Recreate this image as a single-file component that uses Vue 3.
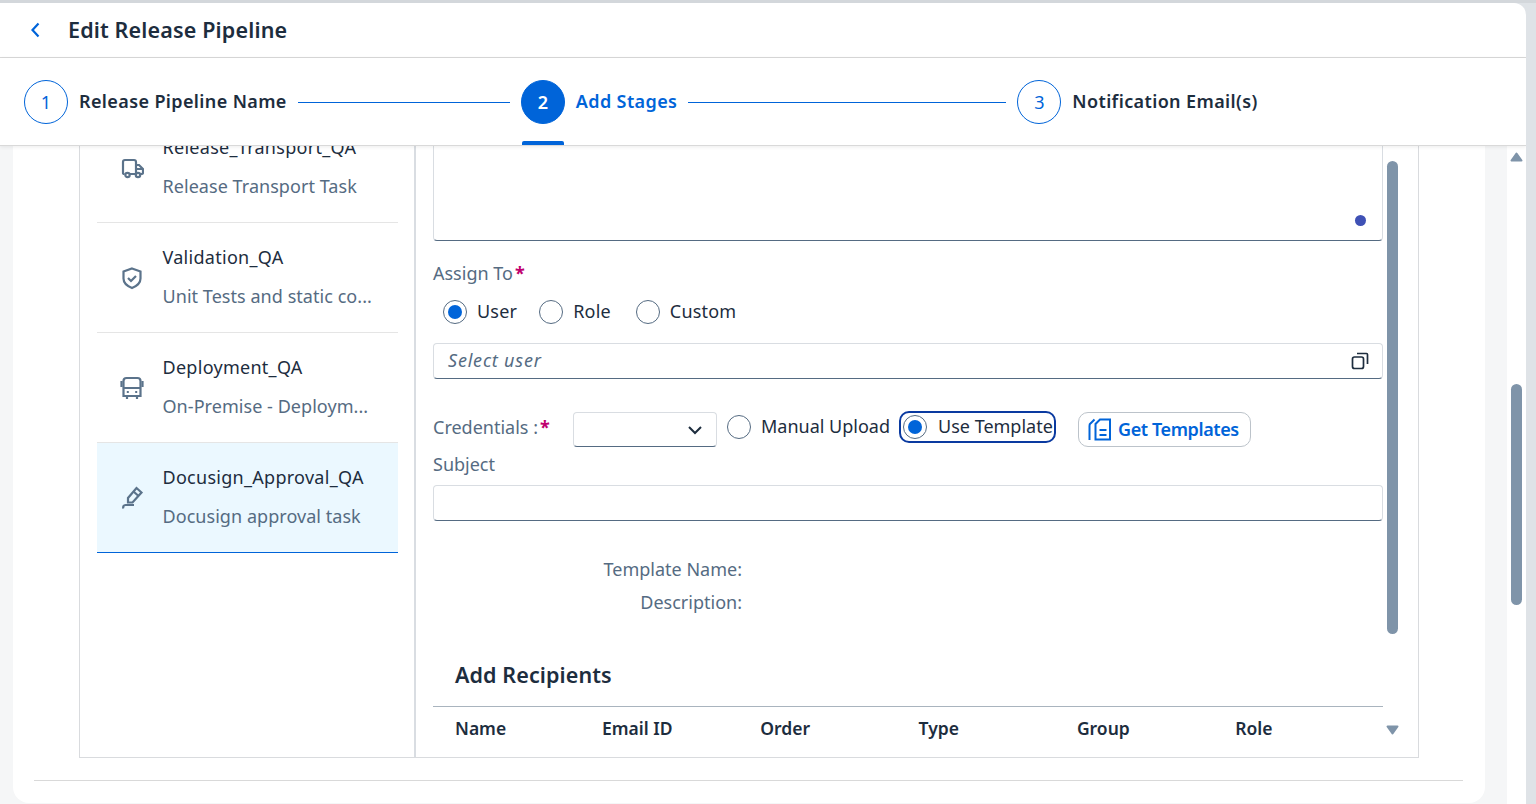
<script setup>
const steps = [
  { n: 1, label: 'Release Pipeline Name', line: 212 },
  { n: 2, label: 'Add Stages', line: 318, active: true },
  { n: 3, label: 'Notification Email(s)' }
]
const tasks = [
  { title: 'Release_Transport_QA', sub: 'Release Transport Task', icon: 'truck' },
  { title: 'Validation_QA', sub: 'Unit Tests and static co...', icon: 'shield' },
  { title: 'Deployment_QA', sub: 'On-Premise - Deploym...', icon: 'bus' },
  { title: 'Docusign_Approval_QA', sub: 'Docusign approval task', icon: 'pen', selected: true }
]
const cols = ['Name', 'Email ID', 'Order', 'Type', 'Group', 'Role']
</script>

<template>
  <div class="page">
    <div class="dialog">
      <header class="head">
        <svg class="back" width="12" height="16" viewBox="0 0 12 16"><path d="M9.500 1.500 3.500 8l6 6.500" fill="none" stroke="#0064d9" stroke-width="2.200"/></svg>
        <h1>Edit Release Pipeline</h1>
      </header>
      <nav class="steps">
        <template v-for="s in steps" :key="s.n">
          <div class="step" :class="{ active: s.active }">
            <span class="num">{{ s.n }}</span>
            <span class="step-label">{{ s.label }}</span>
          </div>
          <span v-if="s.line" class="connector" :style="{ width: s.line + 'px' }"></span>
        </template>
      </nav>
      <div class="body">
        <main class="card">
          <section class="panel">
            <aside class="list">
              <div class="items">
                <div v-for="t in tasks" :key="t.title" class="item" :class="{ selected: t.selected }">
                  <svg class="ticon" width="24" height="24" viewBox="0 0 24 24" fill="none" stroke="#5b738b" stroke-width="2.200">
                    <template v-if="t.icon === 'truck'">
                      <path d="M4.500 18H3.500A1.500 1.500 0 0 1 3 16.500V6a2 2 0 0 1 2-2h9a2 2 0 0 1 2 2v12H10"/>
                      <path d="M16 9h3L23 13v3.500A1.500 1.500 0 0 1 21.500 18h-.8M16 13h7"/>
                      <circle cx="7.500" cy="19" r="2.200"/><circle cx="18" cy="19" r="2.200"/>
                    </template>
                    <template v-else-if="t.icon === 'shield'">
                      <path d="M12 2.500 20.500 5.500v7c0 4.500-3.500 7.500-8.500 9.500-5-2-8.500-5-8.500-9.500v-7z"/>
                      <path d="m8 12 3 3 5-5"/>
                    </template>
                    <template v-else-if="t.icon === 'bus'">
                      <path d="M6.500 2h11A3 3 0 0 1 20.500 5v15h-17V5a3 3 0 0 1 3-3z"/>
                      <path d="M3.500 12h17M1.500 5v6M22.500 5v6M7 20v3M17 20v3"/>
                      <path d="M6.800 16h2M15.200 16h2"/>
                    </template>
                    <template v-else>
                      <path d="M16.500 2 21.500 6.500 12.500 16.500H8v-4.500z"/>
                      <path d="M13.500 5.500 18.500 10"/>
                      <path d="M3.500 22.500c-1-1.800.2-3.500 2-3.500h8.500"/>
                    </template>
                  </svg>
                  <div class="ttext">
                    <div class="ttitle">{{ t.title }}</div>
                    <div class="tsub">{{ t.sub }}</div>
                  </div>
                </div>
              </div>
            </aside>
            <div class="form">
              <div class="textarea"><span class="dot"></span></div>
              <div class="label assign">Assign To<span class="req">*</span></div>
              <div class="radios">
                <label class="radio on"><i></i><span>User</span></label>
                <label class="radio"><i></i><span>Role</span></label>
                <label class="radio"><i></i><span>Custom</span></label>
              </div>
              <div class="input user">
                <span class="ph">Select user</span>
                <svg width="18" height="18" viewBox="0 0 18 18" fill="none" stroke="#1d2d3e" stroke-width="1.700"><rect x="1.500" y="5" width="11" height="11.500" rx="2"/><path d="M6 1.500h9.500a1 1 0 0 1 1 1V12"/></svg>
              </div>
              <div class="cred">
                <span class="label cred-label">Credentials :<span class="req">*</span></span>
                <div class="select"><svg width="16" height="10" viewBox="0 0 16 10"><path d="m2 2 6 6 6-6" fill="none" stroke="#1d2d3e" stroke-width="2"/></svg></div>
                <label class="radio manual"><i></i><span>Manual Upload</span></label>
                <label class="radio tmpl on"><i></i><span>Use Template</span></label>
                <button class="get">
                  <svg width="23" height="23" viewBox="0 0 23 23" fill="none" stroke="#0064d9" stroke-width="2"><path d="M12 1.500h10v20H7.500V6z"/><path d="M11.500 12h7M11.500 17h7"/><path d="M6.500 1.500 2.800 5.200A3 3 0 0 0 1.500 8v14"/></svg>
                  <span class="get-text">Get Templates</span>
                </button>
              </div>
              <div class="label subject">Subject</div>
              <div class="input subj"></div>
              <dl class="meta">
                <dt>Template Name:</dt>
                <dt>Description:</dt>
              </dl>
              <h2>Add Recipients</h2>
              <div class="thead">
                <span v-for="c in cols" :key="c">{{ c }}</span>
              </div>
              <div class="vbar"></div>
              <svg class="varrow" width="13" height="10" viewBox="0 0 13 10"><path d="M1.500 1.500h10L6.500 8.500z" fill="#7f94a9" stroke="#7f94a9" stroke-width="2" stroke-linejoin="round"/></svg>
            </div>
          </section>
          <hr class="rule" />
        </main>
        <div class="outer-scroll">
          <svg class="uparrow" width="13" height="10" viewBox="0 0 13 10"><path d="M1.500 8.500h10L6.500 1.500z" fill="#7f94a9" stroke="#7f94a9" stroke-width="2" stroke-linejoin="round"/></svg>
          <div class="othumb"></div>
        </div>
      </div>
    </div>
  </div>
</template>

<style>
html, body { margin: 0; background: #dfe3e7; overflow: hidden; }
</style>

<style scoped>
* { box-sizing: border-box; }
.page {
  height: 804px;
  border-top: 3px solid #d3d7db;
  background: #dfe3e7;
  overflow: hidden;
  font-family: "Noto Sans", "Open Sans", sans-serif;
  color: #1d2d3e;
}
.dialog {
  width: 1526px;
  height: 801px;
  display: flex;
  flex-direction: column;
  background: #fff;
  border-radius: 0 12px 0 0;
  overflow: hidden;
}
.head {
  height: 55px;
  flex: none;
  display: flex;
  align-items: center;
  padding-left: 29px;
  border-bottom: 1px solid #d9d9d9;
}
.back { margin-right: 27px; }
h1 { margin: 0 0 2px; font-size: 21.500px; font-weight: 600; letter-spacing: .15px; }
.steps {
  height: 88px;
  flex: none;
  display: flex;
  align-items: center;
  padding-left: 24px;
  background: #fff;
  border-bottom: 1px solid #d9d9d9;
  box-shadow: 0 1px 4px rgba(0, 0, 0, .08);
  position: relative;
  z-index: 2;
}
.step { display: flex; align-items: center; gap: 11px; height: 100%; position: relative; }
.num {
  width: 44px;
  height: 44px;
  margin-top: 1px;
  border-radius: 50%;
  border: 1px solid #0064d9;
  color: #0064d9;
  font-size: 18px;
  display: flex;
  align-items: center;
  justify-content: center;
}
.step-label { font-size: 18px; font-weight: 600; letter-spacing: .38px; padding-bottom: 2px; }
.connector { height: 1px; background: #0064d9; margin: 2px 11px 0; }
.step.active .num { background: #0064d9; color: #fff; font-weight: 600; }
.step.active .step-label { color: #0064d9; }
.step.active::after {
  content: "";
  position: absolute;
  left: 1px;
  bottom: 0;
  width: 42px;
  height: 4px;
  background: #0064d9;
  border-radius: 2px 2px 0 0;
}
.body { flex: 1; min-height: 0; display: flex; background: #f5f6f7; }
.card {
  margin-left: 13px;
  width: 1472px;
  height: 657px;
  flex: none;
  background: #fff;
  border-radius: 0 0 16px 16px;
  padding-left: 66px;
}
.panel {
  width: 1340px;
  height: 612px;
  display: flex;
  border: 1px solid #d9dbde;
  border-top: 0;
  overflow: hidden;
}
.list { width: 336px; flex: none; border-right: 2px solid #d9dde2; padding-left: 17px; overflow: hidden; }
.items { margin-top: -33px; width: 301px; }
.item {
  height: 110px;
  border-bottom: 1px solid #e5e5e5;
  display: flex;
  align-items: center;
  padding-left: 23px;
  gap: 18.500px;
}
.item:last-child { border-bottom-color: #0064d9; }
.item.selected { background: #ebf8ff; }
.ttext { width: 220px; padding-bottom: 2px; white-space: nowrap; }
.ttitle { font-size: 18px; line-height: 24px; letter-spacing: .28px; }
.tsub { font-size: 18px; line-height: 24px; margin-top: 15px; color: #556b82; letter-spacing: .05px; }
.ticon { flex: none; }
.form { flex: 1; position: relative; padding-left: 17px; }
.textarea {
  width: 950px;
  height: 95px;
  border: 1px solid #d9dde2;
  border-top: 0;
  border-bottom-color: #556b82;
  border-radius: 0 0 4px 4px;
  position: relative;
}
.dot { position: absolute; right: 16px; bottom: 14px; width: 11px; height: 11px; border-radius: 50%; background: #3f51b5; }
.label { font-size: 18px; line-height: 24px; color: #556b82; }
.req { color: #c0006e; font-weight: 700; margin-left: 2px; }
.assign { margin-top: 20px; }
.radios { display: flex; margin-top: 15px; padding-left: 10px; gap: 25px; }
.radios .radio { letter-spacing: .2px; }
.radios .radio:first-child { margin-right: -3px; }
.radio { display: inline-flex; align-items: center; gap: 10px; font-size: 18px; line-height: 24px; color: #1d2d3e; }
.radio span { line-height: 22px; padding-bottom: 2px; }
.radio i {
  width: 24px;
  height: 24px;
  border-radius: 50%;
  border: 1.500px solid #556b82;
  flex: none;
  position: relative;
}
.radio.on i::after {
  content: "";
  position: absolute;
  inset: 4px;
  border-radius: 50%;
  background: #0064d9;
}
.input {
  width: 950px;
  height: 36px;
  border: 1px solid #d9dde2;
  border-bottom-color: #556b82;
  border-radius: 4px;
}
.user {
  margin-top: 19px;
  display: flex;
  align-items: center;
  justify-content: space-between;
  padding: 0 13px 0 14px;
  font-size: 18px;
  font-style: italic;
  color: #556b82;
}
.ph { letter-spacing: .8px; padding-bottom: 2px; }
.cred { display: flex; align-items: flex-start; height: 35px; margin-top: 33px; }
.cred-label { width: 140px; margin-top: 3px; }
.select {
  width: 144px;
  height: 35px;
  border: 1px solid #d9dde2;
  border-bottom-color: #556b82;
  border-radius: 4px;
  display: flex;
  align-items: center;
  justify-content: flex-end;
  padding-right: 13px;
}
.manual { margin: 3px 0 0 10px; }
.tmpl {
  margin: -1px 0 0 9px;
  width: 157px;
  height: 32px;
  padding-left: 2px;
  border: 2px solid #0a3aa0;
  border-radius: 10px;
  gap: 11px;
  white-space: nowrap;
}
.get {
  margin-left: 22px;
  width: 173px;
  height: 35px;
  display: inline-flex;
  align-items: center;
  gap: 7px;
  padding: 0 0 0 9px;
  background: #fff;
  border: 1px solid #bcc3ca;
  border-radius: 10px;
  color: #0064d9;
  font: 600 18px "Noto Sans", sans-serif;
  letter-spacing: -.4px;
  white-space: nowrap;
}
.get-text { padding-bottom: 2px; }
.subject { margin-top: 5px; }
.subj { margin-top: 9px; }
.meta { margin: 32px 0 0; width: 309px; text-align: right; }
.meta dt { font-size: 18px; line-height: 33px; color: #556b82; }
h2 { margin: 41px 0 0 22px; font-size: 21.500px; font-weight: 600; line-height: 30px; letter-spacing: .1px; }
.thead {
  width: 950px;
  margin-top: 16px;
  padding: 0 0 4px 22px;
  border-top: 1px solid #a9b4be;
  height: 46px;
  display: grid;
  grid-template-columns: 147px 158.300px 158.300px 158.300px 158.300px 100px;
  align-items: center;
  font-size: 17.500px;
  font-weight: 600;
}
.vbar { position: absolute; left: 971px; top: 15px; width: 11px; height: 473px; background: #7f94a9; border-radius: 6px; }
.varrow { position: absolute; left: 970px; top: 579px; }
.rule { margin: 22px 0 0 -45px; width: 1429px; border: 0; border-top: 1px solid #d9d9d9; }
.outer-scroll { width: 19px; height: 100%; background: #fff; margin-left: 22px; position: relative; }
.uparrow { position: absolute; left: 3px; top: 6px; }
.othumb { position: absolute; left: 4px; top: 238px; width: 11px; height: 221px; background: #7f94a9; border-radius: 6px; }
</style>
